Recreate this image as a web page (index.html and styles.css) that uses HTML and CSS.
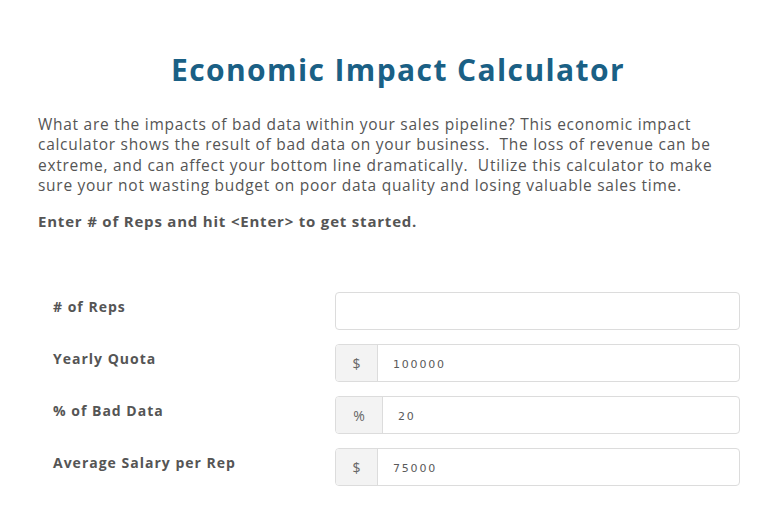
FILE: index.html
```html
<!DOCTYPE html>
<html>
<head>
<meta charset="utf-8">
<link rel="stylesheet" href="styles.css">
</head>
<body>
<div class="page">
  <h1 class="title">Economic Impact Calculator</h1>
  <p class="intro">What are the impacts of bad data within your sales pipeline? This economic impact calculator shows the result of bad data on your business.&nbsp; The loss of revenue can be extreme, and can affect your bottom line dramatically.&nbsp; Utilize this calculator to make sure your not wasting budget on poor data quality and losing valuable sales time.</p>
  <p class="lead">Enter # of Reps and hit &lt;Enter&gt; to get started.</p>
  <form class="form">
    <div class="row">
      <label class="label">#&nbsp;of Reps</label>
      <div class="field"><input class="input" type="text" value=""></div>
    </div>
    <div class="row">
      <label class="label">Yearly Quota</label>
      <div class="field"><span class="addon">$</span><input class="input" type="text" value="100000"></div>
    </div>
    <div class="row">
      <label class="label">% of Bad Data</label>
      <div class="field"><span class="addon addon-pct">%</span><input class="input" type="text" value="20"></div>
    </div>
    <div class="row">
      <label class="label">Average Salary per Rep</label>
      <div class="field"><span class="addon">$</span><input class="input" type="text" value="75000"></div>
    </div>
  </form>
</div>
</body>
</html>
```
FILE: styles.css
```css
html, body { margin: 0; padding: 0; background: #fff; }
body { font-family: "Open Sans", "DejaVu Sans", sans-serif; color: #555; }
.page { padding: 0 38px 0 38px; }
.title {
  margin: 50px 0 0 0;
  padding-left: 13px;
  font-size: 30px;
  line-height: 40px;
  font-weight: 700;
  letter-spacing: 1.4px;
  color: #1a6085;
  text-align: center;
}
.intro {
  margin: 24px 0 0 0;
  font-size: 15.5px;
  line-height: 20.3px;
  letter-spacing: 0.72px;
  color: #555;
}
.lead {
  margin: 16px 0 0 0;
  font-size: 15px;
  line-height: 20px;
  font-weight: 700;
  letter-spacing: 0.8px;
  color: #555;
}
.form { margin-top: 61px; display: flex; flex-direction: column; gap: 14px; }
.row { display: grid; grid-template-columns: 297px 405px; align-items: center; }
.label {
  padding-left: 15px;
  font-size: 14px;
  font-weight: 700;
  letter-spacing: 1px;
  color: #555;
  margin-top: -10px;
}
.field {
  display: flex;
  height: 38px;
  box-sizing: border-box;
  border: 1px solid #dcdcdc;
  border-radius: 4px;
  overflow: hidden;
  background: #fff;
}
.addon {
  width: 42px;
  flex: none;
  box-sizing: border-box;
  display: flex;
  align-items: center;
  justify-content: center;
  background: #f3f3f3;
  border-right: 1px solid #dcdcdc;
  font-size: 14px;
  color: #666;
}
.addon-pct { width: 47px; }
.input {
  flex: 1;
  min-width: 0;
  border: 0;
  outline: none;
  padding: 3px 0 0 15px;
  font-family: "DejaVu Sans", "Open Sans", sans-serif;
  font-size: 11px;
  letter-spacing: 1.8px;
  color: #5a5a5a;
  background: transparent;
}
```
